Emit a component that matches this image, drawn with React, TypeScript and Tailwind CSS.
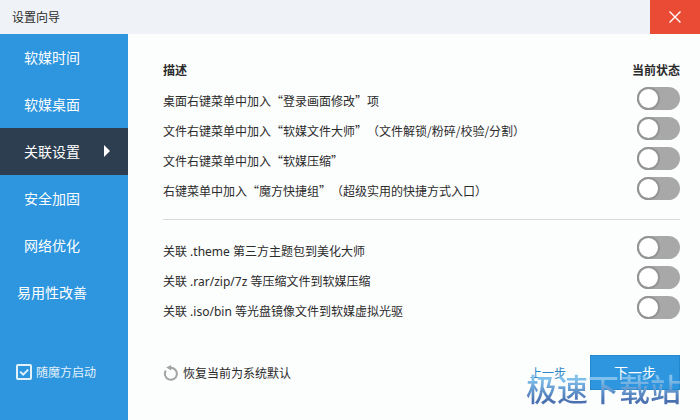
import { useState } from "react";
import clsx from "clsx";

const NAV = ["软媒时间", "软媒桌面", "关联设置", "安全加固", "网络优化", "易用性改善"];

const MENU_OPTIONS = [
  "桌面右键菜单中加入“登录画面修改”项",
  "文件右键菜单中加入“软媒文件大师”（文件解锁/粉碎/校验/分割）",
  "文件右键菜单中加入“软媒压缩”",
  "右键菜单中加入“魔方快捷组”（超级实用的快捷方式入口）",
];

const FILE_OPTIONS = [
  "关联 .theme 第三方主题包到美化大师",
  "关联 .rar/zip/7z 等压缩文件到软媒压缩",
  "关联 .iso/bin 等光盘镜像文件到软媒虚拟光驱",
];

function CloseIcon() {
  return (
    <svg width="14" height="14" viewBox="0 0 14 14" fill="none">
      <path d="M1.5 1.5l11 11M12.5 1.5l-11 11" stroke="currentColor" strokeWidth="1.4" />
    </svg>
  );
}

function ResetIcon() {
  return (
    <svg width="16" height="16" viewBox="0 0 16 16" fill="none">
      <path d="M7.5 2.8A6 6 0 1 1 2.8 5.6" stroke="#a3a3a3" strokeWidth="2" />
      <path d="M3.2 2.6L8.2 0v5.4z" fill="#a3a3a3" />
    </svg>
  );
}

function OptionRow({ text, latin }: { text: string; latin?: boolean }) {
  const [on, setOn] = useState(false);

  return (
    <label className="flex h-[30px] items-start justify-between">
      <span
        className={clsx(
          latin
            ? "font-['Noto_Sans','Noto_Sans_CJK_SC',sans-serif] leading-[32px]"
            : "font-['Noto_Sans_CJK_SC',sans-serif] leading-[28px]"
        )}
      >
        {text}
      </span>
      <input
        type="checkbox"
        role="switch"
        checked={on}
        onChange={() => setOn(!on)}
        className="h-[23px] w-[43px] shrink-0 appearance-none rounded-full bg-[#a8a8a8] before:block before:size-[23px] before:rounded-full before:border-2 before:border-[#949494] before:bg-white before:content-[''] checked:bg-[#2e96de] checked:before:ml-5"
      />
    </label>
  );
}

export default function App() {
  const [active, setActive] = useState(2);
  const [autoStart, setAutoStart] = useState(true);

  return (
    <div
      lang="zh-CN"
      className="relative flex min-h-screen flex-col overflow-hidden bg-[#fcfdfd] font-['Noto_Sans_CJK_SC',sans-serif] text-xs text-[#2b2b2b] [text-spacing-trim:space-all]"
    >
      {/* Title bar */}
      <header className="flex h-[34px] items-center justify-between bg-[#eff3f8] pl-3">
        <h1>设置向导</h1>
        <button aria-label="关闭" className="flex h-full w-[50px] items-center justify-center bg-[#e94b35] text-white">
          <CloseIcon />
        </button>
      </header>

      <div className="flex flex-1">
        {/* Sidebar */}
        <aside className="flex w-32 shrink-0 flex-col bg-[#2e96de] text-white">
          <nav>
            {NAV.map((name, i) => (
              <button
                key={name}
                onClick={() => setActive(i)}
                className={clsx("flex h-[47px] w-full items-center pb-0.5 text-sm", i === active && "bg-[#2c3e50]")}
              >
                <span className="w-[104px] text-center">{name}</span>
                {i === active && (
                  <svg width="6" height="12" viewBox="0 0 6 12">
                    <path d="M0 0l6 6-6 6z" fill="white" />
                  </svg>
                )}
              </button>
            ))}
          </nav>
          <label className="mt-auto mb-10 ml-4 flex h-4 items-center gap-1 text-[#e3f1fb]">
            <span className="grid">
              <input
                type="checkbox"
                checked={autoStart}
                onChange={() => setAutoStart(!autoStart)}
                className="col-start-1 row-start-1 size-4 appearance-none rounded-[2px] border-2 border-[#e3f1fb]"
              />
              {autoStart && (
                <svg className="pointer-events-none col-start-1 row-start-1" width="16" height="16" viewBox="0 0 16 16" fill="none">
                  <path d="M4.2 7.6l3 3 5-5" stroke="currentColor" strokeWidth="2" />
                </svg>
              )}
            </span>
            随魔方启动
          </label>
        </aside>

        {/* Options */}
        <main className="flex flex-1 flex-col pr-5 pb-[30px] pl-[35px]">
          <div className="mt-7 mb-[9px] flex justify-between font-bold">
            <h2>描述</h2>
            <h2>当前状态</h2>
          </div>
          {MENU_OPTIONS.map((text) => (
            <OptionRow key={text} text={text} />
          ))}
          <hr className="mt-3 mb-4 border-[#d9dbdb]" />
          {FILE_OPTIONS.map((text) => (
            <OptionRow key={text} text={text} latin />
          ))}

          {/* Footer */}
          <div className="mt-auto flex h-[35px] items-center">
            <button className="flex items-center gap-1">
              <ResetIcon />
              恢复当前为系统默认
            </button>
            <button className="mr-6 ml-auto text-[#2e86c6]">上一步</button>
            <button className="h-full w-[90px] border border-[#2488cf] bg-[#2e96de] pb-0.5 text-sm text-white">
              下一步
            </button>
          </div>
        </main>
      </div>

      {/* Site watermark */}
      <div className="pointer-events-none absolute right-[19px] bottom-2.5 bg-linear-to-b from-[#7fc0ec] from-30% to-[#4a70b0] to-80% bg-clip-text text-[31px] leading-[44px] font-medium text-transparent">
        极速下载站
      </div>
    </div>
  );
}
